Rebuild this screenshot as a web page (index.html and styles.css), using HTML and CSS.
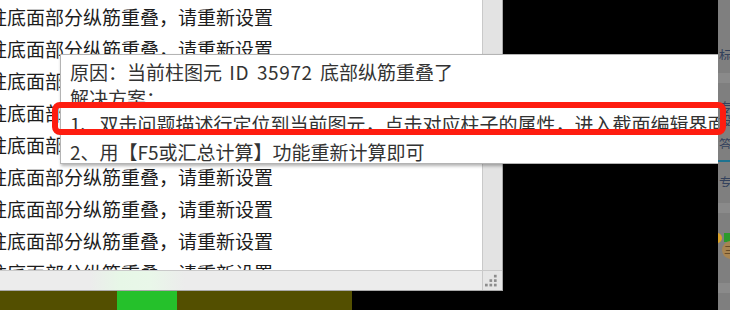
FILE: index.html
```html
<!DOCTYPE html>
<html lang="zh-CN">
<head>
<meta charset="utf-8">
<title>问题列表</title>
<link rel="stylesheet" href="styles.css">
</head>
<body>
<div class="screen">
  <div class="top">
    <div class="panel">
      <div class="list">
        <div class="row">柱底面部分纵筋重叠，请重新设置</div>
        <div class="row">柱底面部分纵筋重叠，请重新设置</div>
        <div class="row">柱底面部分纵筋重叠，请重新设置</div>
        <div class="row">柱底面部分纵筋重叠，请重新设置</div>
        <div class="row">柱底面部分纵筋重叠，请重新设置</div>
        <div class="row">柱底面部分纵筋重叠，请重新设置</div>
        <div class="row">柱底面部分纵筋重叠，请重新设置</div>
        <div class="row">柱底面部分纵筋重叠，请重新设置</div>
        <div class="row">柱底面部分纵筋重叠，请重新设置</div>
      </div>
      <div class="vscroll"></div>
      <div class="hscroll"></div>
      <div class="grip">
        <svg width="19" height="19" viewBox="0 0 19 19">
          <rect x="10" y="2" width="3" height="3" fill="#8d8d8d"/>
          <rect x="5" y="7" width="3" height="3" fill="#8d8d8d"/>
          <rect x="10" y="7" width="3" height="3" fill="#8d8d8d"/>
          <rect x="0" y="12" width="3" height="3" fill="#8d8d8d"/>
          <rect x="5" y="12" width="3" height="3" fill="#8d8d8d"/>
          <rect x="10" y="12" width="3" height="3" fill="#8d8d8d"/>
        </svg>
      </div>
    </div>
  </div>
  <div class="bottombar">
    <div class="olive left"></div>
    <div class="greenblock"></div>
    <div class="olive right"></div>
  </div>

  <div class="tooltip">
    <div class="tline wide">原因：当前柱图元 <span class="latin">ID 35972</span> 底部纵筋重叠了</div>
    <div class="tline">解决方案：</div>
    <div class="tline">1、双击问题描述行定位到当前图元，点击对应柱子的属性，进入截面编辑界面修改</div>
    <div class="tline last">2、用【F5或汇总计算】功能重新计算即可</div>
  </div>

  <div class="strip">
    <div class="s-gap h48"></div>
    <div class="s-glyph h12">标</div>
    <div class="s-gap h13"></div>
    <div class="s-band h10"></div>
    <div class="s-gap h17"></div>
    <div class="s-glyph h13">专</div>
    <div class="s-glyph h13">设</div>
    <div class="s-gap h11"></div>
    <div class="s-glyph h12">答</div>
    <div class="s-gap h11"></div>
    <div class="s-teal"></div>
    <div class="s-gap h13"></div>
    <div class="s-glyph h12">专家</div>
    <div class="s-gap h16"></div>
    <div class="s-band h10"></div>
    <div class="s-gap h20"></div>
    <div class="s-icons">
      <span class="s-orange"></span>
      <span class="s-green"></span>
      <span class="s-coin">三</span>
    </div>
    <div class="s-gap h24"></div>
    <div class="s-band h10"></div>
  </div>

  <div class="redbox"></div>
</div>
</body>
</html>
```

FILE: styles.css
```css
html, body {
  margin: 0;
  padding: 0;
  background: #000;
}

.screen {
  position: relative;
  width: 730px;
  height: 310px;
  overflow: hidden;
  background: #000;
  font-family: "Noto Sans CJK SC", "Noto Sans", sans-serif;
}

.top {
  display: flex;
  height: 291px;
}

.panel {
  display: grid;
  grid-template-columns: 482px 19px;
  grid-template-rows: 270px 19px;
  column-gap: 1px;
  row-gap: 1px;
  background: #c9c9c9;
  border-right: 1px solid #a9a9a9;
  border-bottom: 1px solid #a9a9a9;
  width: 502px;
}

.list {
  background: #fff;
  overflow: hidden;
  color: #1c1c1c;
  font-size: 19px;
  padding-top: 1px;
}

.row {
  height: 32px;
  line-height: 32px;
  margin-left: -12px;
  white-space: nowrap;
}

.vscroll {
  background: #e3e3e3;
}

.hscroll {
  background: linear-gradient(to right, #ececec 0, #ececec 90px, #e7f7e7 120px, #e9f7e9 150px, #ececec 185px, #ececec 100%);
}

.grip {
  background: #e6e6e6;
  display: flex;
  align-items: flex-start;
  justify-content: flex-start;
  padding: 1px 0 0 2px;
  box-sizing: border-box;
}

.bottombar {
  display: flex;
  height: 19px;
}

.olive {
  background: #534f00;
}
.olive.left { width: 117px; }
.olive.right { width: 175px; }

.greenblock {
  width: 60px;
  background: #25c12b;
}

.tooltip {
  position: absolute;
  left: 60px;
  top: 54px;
  width: 700px;
  height: 110px;
  box-sizing: border-box;
  background: #fff;
  border: 1px solid #b4b4b4;
  box-shadow: 1px 2px 3px rgba(0, 0, 0, 0.3);
  padding: 4px 0 0 9px;
  color: #333;
  font-size: 19px;
}

.tline {
  height: 26px;
  line-height: 26px;
  white-space: nowrap;
}

.tline.wide {
  word-spacing: 3px;
}

.latin {
  letter-spacing: 0.6px;
}

.tline.last {
  margin-top: 2px;
}

.strip {
  position: absolute;
  left: 718px;
  top: 0;
  width: 12px;
  height: 310px;
  background: #7f7f7f;
  overflow: hidden;
  display: flex;
  flex-direction: column;
}

.s-gap { flex: none; }
.h10 { height: 10px; }
.h11 { height: 11px; }
.h12 { height: 12px; }
.h13 { height: 13px; }
.h16 { height: 16px; }
.h17 { height: 17px; }
.h20 { height: 20px; }
.h24 { height: 24px; }
.h48 { height: 48px; }

.s-glyph {
  flex: none;
  font-size: 13px;
  line-height: 13px;
  color: #33415c;
  white-space: nowrap;
  padding-left: 1px;
  overflow: hidden;
}

.s-band {
  flex: none;
  background: #8a8a8a;
}

.s-teal {
  flex: none;
  height: 2px;
  background: #1d7390;
}

.s-icons {
  flex: none;
  position: relative;
  height: 26px;
}

.s-orange {
  position: absolute;
  left: -6px;
  top: 0;
  width: 10px;
  height: 10px;
  border-radius: 50%;
  background: #d9a22a;
}

.s-green {
  position: absolute;
  left: 6px;
  top: 0;
  width: 6px;
  height: 9px;
  background: #2c9a2c;
}

.s-coin {
  position: absolute;
  left: 4px;
  top: 8px;
  width: 18px;
  height: 18px;
  border-radius: 50%;
  background: #a88552;
  color: #5a4020;
  font-size: 10px;
  line-height: 18px;
  text-indent: 2px;
}

.redbox {
  position: absolute;
  left: 52px;
  top: 102px;
  width: 674px;
  height: 33px;
  box-sizing: border-box;
  border: 6px solid #fe1d10;
  border-radius: 8px;
}
```
